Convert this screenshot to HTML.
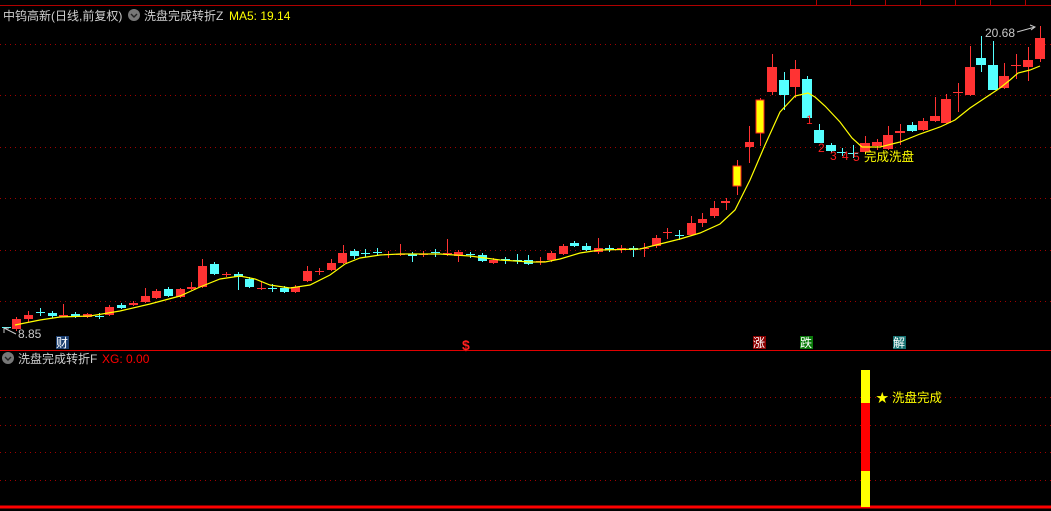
<!DOCTYPE html>
<html><head><meta charset="utf-8"><style>
html,body{margin:0;padding:0;background:#000;width:1051px;height:511px;overflow:hidden}
svg{display:block}
text{font-family:"Liberation Sans","Noto Sans CJK SC",sans-serif}
</style></head><body>
<svg width="1051" height="511" viewBox="0 0 1051 511" xmlns="http://www.w3.org/2000/svg">
<line x1="0" y1="5.5" x2="1051" y2="5.5" stroke="#b00000" stroke-width="1"/>
<g stroke="#b00000"><line x1="816.5" y1="0" x2="816.5" y2="5"/><line x1="850.5" y1="0" x2="850.5" y2="5"/><line x1="885.5" y1="0" x2="885.5" y2="5"/><line x1="920.5" y1="0" x2="920.5" y2="5"/><line x1="955.5" y1="0" x2="955.5" y2="5"/><line x1="990.5" y1="0" x2="990.5" y2="5"/><line x1="1025.5" y1="0" x2="1025.5" y2="5"/></g>
<g stroke="#a00000" stroke-dasharray="1,4" stroke-width="1">
<line x1="0" y1="44.5" x2="1051" y2="44.5"/><line x1="0" y1="95.5" x2="1051" y2="95.5"/><line x1="0" y1="147.5" x2="1051" y2="147.5"/><line x1="0" y1="198.5" x2="1051" y2="198.5"/><line x1="0" y1="250.5" x2="1051" y2="250.5"/><line x1="0" y1="301.5" x2="1051" y2="301.5"/>
<line x1="0" y1="397.5" x2="1051" y2="397.5"/><line x1="0" y1="425.5" x2="1051" y2="425.5"/><line x1="0" y1="452.5" x2="1051" y2="452.5"/><line x1="0" y1="480.5" x2="1051" y2="480.5"/>
</g>
<line x1="0" y1="350.5" x2="1051" y2="350.5" stroke="#e00000" stroke-width="1"/>
<line x1="0" y1="507" x2="1051" y2="507" stroke="#ff0000" stroke-width="3"/>
<text x="3" y="20" font-size="12" fill="#d0d0d0">中钨高新(日线,前复权)</text>
<circle cx="134" cy="15" r="6" fill="#777"/><path d="M131 14 l3 3 l3 -3" stroke="#222" stroke-width="1.4" fill="none"/>
<text x="144" y="20" font-size="12" fill="#d0d0d0">洗盘完成转折Z</text>
<text x="229" y="20" font-size="12" fill="#ffff00">MA5: 19.14</text>
<circle cx="8" cy="358" r="6" fill="#777"/><path d="M5 357 l3 3 l3 -3" stroke="#222" stroke-width="1.4" fill="none"/>
<text x="18" y="363" font-size="12" fill="#d0d0d0">洗盘完成转折F</text>
<text x="102" y="363" font-size="12" fill="#ff0000">XG: 0.00</text>
<g stroke-width="1">
<g stroke="#ff3333">
<line x1="16.5" y1="317" x2="16.5" y2="331"/><line x1="28.5" y1="311" x2="28.5" y2="322"/><line x1="63.5" y1="304" x2="63.5" y2="317"/><line x1="87.5" y1="313" x2="87.5" y2="318"/><line x1="109.5" y1="305" x2="109.5" y2="316"/><line x1="133.5" y1="301" x2="133.5" y2="306"/><line x1="145.5" y1="288" x2="145.5" y2="303"/><line x1="156.5" y1="289" x2="156.5" y2="299"/><line x1="180.5" y1="288" x2="180.5" y2="298"/><line x1="191.5" y1="282" x2="191.5" y2="290"/><line x1="202.5" y1="259" x2="202.5" y2="288"/><line x1="226.5" y1="272" x2="226.5" y2="277"/><line x1="261.5" y1="282" x2="261.5" y2="290"/><line x1="295.5" y1="285" x2="295.5" y2="293"/><line x1="307.5" y1="266" x2="307.5" y2="282"/><line x1="319.5" y1="268" x2="319.5" y2="275"/><line x1="331.5" y1="259" x2="331.5" y2="271"/><line x1="343.5" y1="245" x2="343.5" y2="264"/>
<line x1="388.5" y1="251" x2="388.5" y2="258"/><line x1="400.5" y1="244" x2="400.5" y2="256"/><line x1="423.5" y1="251" x2="423.5" y2="257"/><line x1="447.5" y1="239" x2="447.5" y2="256"/><line x1="458.5" y1="250" x2="458.5" y2="262"/><line x1="493.5" y1="258" x2="493.5" y2="264"/><line x1="540.5" y1="257" x2="540.5" y2="265"/><line x1="551.5" y1="251" x2="551.5" y2="262"/><line x1="563.5" y1="244" x2="563.5" y2="255"/><line x1="598.5" y1="238" x2="598.5" y2="254"/><line x1="621.5" y1="245" x2="621.5" y2="253"/><line x1="644.5" y1="243" x2="644.5" y2="257"/><line x1="656.5" y1="235" x2="656.5" y2="248"/><line x1="667.5" y1="228" x2="667.5" y2="239"/><line x1="691.5" y1="216" x2="691.5" y2="236"/><line x1="702.5" y1="213" x2="702.5" y2="227"/><line x1="714.5" y1="201" x2="714.5" y2="218"/><line x1="726.5" y1="198" x2="726.5" y2="210"/><line x1="737.5" y1="160" x2="737.5" y2="195"/><line x1="749.5" y1="126" x2="749.5" y2="163"/><line x1="760.5" y1="98" x2="760.5" y2="146"/><line x1="772.5" y1="54" x2="772.5" y2="95"/><line x1="795.5" y1="60" x2="795.5" y2="98"/><line x1="865.5" y1="136" x2="865.5" y2="154"/><line x1="877.5" y1="139" x2="877.5" y2="150"/><line x1="888.5" y1="126" x2="888.5" y2="150"/><line x1="900.5" y1="124" x2="900.5" y2="145"/><line x1="923.5" y1="118" x2="923.5" y2="131"/><line x1="935.5" y1="97" x2="935.5" y2="122"/><line x1="946.5" y1="94" x2="946.5" y2="124"/><line x1="958.5" y1="83" x2="958.5" y2="112"/><line x1="970.5" y1="46" x2="970.5" y2="96"/><line x1="1004.5" y1="63" x2="1004.5" y2="89"/><line x1="1016.5" y1="54" x2="1016.5" y2="79"/><line x1="1028.5" y1="47" x2="1028.5" y2="81"/><line x1="1040.5" y1="26" x2="1040.5" y2="62"/>
</g>
<g stroke="#55ffff">
<line x1="40.5" y1="308" x2="40.5" y2="316"/><line x1="52.5" y1="311" x2="52.5" y2="318"/><line x1="75.5" y1="312" x2="75.5" y2="318"/><line x1="99.5" y1="313" x2="99.5" y2="319"/><line x1="121.5" y1="303" x2="121.5" y2="309"/><line x1="168.5" y1="287" x2="168.5" y2="297"/><line x1="214.5" y1="262" x2="214.5" y2="275"/><line x1="238.5" y1="272" x2="238.5" y2="290"/><line x1="249.5" y1="277" x2="249.5" y2="288"/><line x1="272.5" y1="284" x2="272.5" y2="292"/><line x1="284.5" y1="286" x2="284.5" y2="293"/><line x1="354.5" y1="249" x2="354.5" y2="259"/><line x1="365.5" y1="249" x2="365.5" y2="257"/><line x1="377.5" y1="248" x2="377.5" y2="256"/><line x1="412.5" y1="252" x2="412.5" y2="262"/><line x1="435.5" y1="249" x2="435.5" y2="257"/><line x1="470.5" y1="252" x2="470.5" y2="258"/><line x1="482.5" y1="253" x2="482.5" y2="262"/><line x1="505.5" y1="257" x2="505.5" y2="264"/><line x1="517.5" y1="254" x2="517.5" y2="264"/><line x1="528.5" y1="255" x2="528.5" y2="265"/><line x1="574.5" y1="241" x2="574.5" y2="247"/><line x1="586.5" y1="243" x2="586.5" y2="251"/><line x1="609.5" y1="245" x2="609.5" y2="252"/><line x1="633.5" y1="246" x2="633.5" y2="257"/><line x1="679.5" y1="230" x2="679.5" y2="240"/><line x1="784.5" y1="72" x2="784.5" y2="110"/><line x1="807.5" y1="76" x2="807.5" y2="118"/><line x1="819.5" y1="124" x2="819.5" y2="143"/><line x1="831.5" y1="143" x2="831.5" y2="153"/><line x1="842.5" y1="148" x2="842.5" y2="156"/><line x1="853.5" y1="145" x2="853.5" y2="158"/><line x1="912.5" y1="122" x2="912.5" y2="132"/><line x1="981.5" y1="36" x2="981.5" y2="72"/><line x1="993.5" y1="41" x2="993.5" y2="90"/>
</g>
</g>
<g fill="#ff3333">
<rect x="12" y="319" width="9" height="10"/><rect x="24" y="315" width="9" height="4"/><rect x="59" y="315" width="9" height="2"/><rect x="83" y="314" width="9" height="3"/><rect x="105" y="307" width="9" height="8"/><rect x="129" y="303" width="9" height="2"/><rect x="141" y="296" width="9" height="6"/><rect x="152" y="291" width="9" height="7"/><rect x="176" y="289" width="9" height="8"/><rect x="187" y="287" width="9" height="2"/><rect x="198" y="266" width="9" height="21"/><rect x="222" y="274" width="9" height="1"/><rect x="257" y="288" width="9" height="1"/><rect x="291" y="287" width="9" height="5"/><rect x="303" y="271" width="9" height="10"/><rect x="315" y="271" width="9" height="1"/><rect x="327" y="263" width="9" height="7"/><rect x="338" y="253" width="9" height="10"/>
<rect x="384" y="254" width="9" height="1"/><rect x="396" y="254" width="9" height="1"/><rect x="419" y="254" width="9" height="1"/><rect x="443" y="253" width="9" height="1"/><rect x="454" y="252" width="9" height="4"/><rect x="489" y="260" width="9" height="3"/><rect x="536" y="261" width="9" height="1"/><rect x="547" y="253" width="9" height="7"/><rect x="559" y="246" width="9" height="8"/><rect x="594" y="248" width="9" height="4"/><rect x="617" y="248" width="9" height="2"/><rect x="640" y="248" width="9" height="1"/><rect x="652" y="238" width="9" height="8"/><rect x="663" y="232" width="9" height="1"/><rect x="687" y="223" width="9" height="12"/><rect x="698" y="219" width="9" height="4"/><rect x="710" y="208" width="9" height="8"/><rect x="721" y="201" width="9" height="2"/><rect x="745" y="142" width="9" height="5"/><rect x="767" y="67" width="10" height="25"/><rect x="790" y="69" width="10" height="18"/><rect x="860" y="143" width="10" height="9"/><rect x="872" y="142" width="10" height="4"/><rect x="883" y="135" width="10" height="14"/><rect x="895" y="131" width="10" height="2"/><rect x="918" y="121" width="10" height="9"/><rect x="930" y="116" width="10" height="5"/><rect x="941" y="99" width="10" height="24"/><rect x="953" y="92" width="10" height="1"/><rect x="965" y="67" width="10" height="28"/><rect x="999" y="76" width="10" height="12"/><rect x="1011" y="65" width="10" height="1"/><rect x="1023" y="60" width="10" height="7"/><rect x="1035" y="38" width="10" height="21"/>
</g>
<g fill="#55ffff">
<rect x="2" y="327" width="9" height="1"/><rect x="36" y="312" width="9" height="1"/><rect x="48" y="313" width="9" height="3"/><rect x="71" y="314" width="9" height="3"/><rect x="95" y="316" width="9" height="1"/><rect x="117" y="305" width="9" height="3"/><rect x="164" y="289" width="9" height="7"/><rect x="210" y="264" width="9" height="10"/><rect x="234" y="274" width="9" height="3"/><rect x="245" y="279" width="9" height="8"/><rect x="268" y="288" width="9" height="1"/><rect x="280" y="288" width="9" height="4"/><rect x="350" y="251" width="9" height="5"/><rect x="361" y="253" width="9" height="1"/><rect x="373" y="252" width="9" height="1"/><rect x="408" y="254" width="9" height="2"/><rect x="431" y="252" width="9" height="1"/><rect x="466" y="254" width="9" height="1"/><rect x="478" y="255" width="9" height="6"/><rect x="501" y="259" width="9" height="1"/><rect x="513" y="260" width="9" height="1"/><rect x="524" y="260" width="9" height="4"/><rect x="570" y="243" width="9" height="3"/><rect x="582" y="246" width="9" height="4"/><rect x="605" y="248" width="9" height="2"/><rect x="629" y="248" width="9" height="2"/><rect x="675" y="235" width="9" height="1"/><rect x="779" y="80" width="10" height="15"/><rect x="802" y="79" width="10" height="39"/><rect x="814" y="130" width="10" height="13"/><rect x="826" y="145" width="10" height="6"/><rect x="837" y="152" width="10" height="1"/><rect x="848" y="153" width="10" height="1"/><rect x="907" y="125" width="10" height="6"/><rect x="976" y="58" width="10" height="7"/><rect x="988" y="65" width="10" height="25"/>
</g>
<rect x="733" y="166" width="8" height="20" fill="#ffff00" stroke="#ff2020" stroke-width="1"/>
<rect x="756" y="100" width="8" height="33" fill="#ffff00" stroke="#ff2020" stroke-width="1"/>
<polyline fill="none" stroke="#ffff00" stroke-width="1.2" points="15,325 40,320 60,317 90,316 120,311 150,304 180,296 200,287 220,279 240,276 255,279 270,285 290,288 310,285 330,275 345,264 360,258 380,255 400,254 440,254 470,256 500,260 530,262 545,262 560,259 580,253 600,250 640,249 660,244 680,239 700,233 720,224 735,210 750,180 765,145 780,112 795,96 808,93 815,97 825,106 840,122 852,138 862,147 880,147 900,142 920,134 940,127 955,120 970,108 985,98 1000,88 1010,80 1018,73 1030,70 1040,66"/>
<text x="806" y="124" font-size="12" fill="#ff2020">1</text>
<text x="818" y="152" font-size="12" fill="#ff2020">2</text>
<text x="830" y="160" font-size="12" fill="#ff2020">3</text>
<text x="842" y="160" font-size="12" fill="#ff2020">4</text>
<text x="853" y="161" font-size="12" fill="#ff2020">5</text>
<text x="864" y="161" font-size="12.5" fill="#ffff00">完成洗盘</text>
<text x="985" y="37" font-size="12" fill="#c8c8c8">20.68</text>
<path d="M1017 32 L1035 27 M1030 25 L1035 27 L1031 30" stroke="#c8c8c8" fill="none"/>
<text x="18" y="338" font-size="12" fill="#c8c8c8">8.85</text>
<path d="M4 328 L16 334 M4 328 L4 333 M4 328 L9 328" stroke="#c8c8c8" fill="none"/>
<rect x="56" y="336" width="13" height="13" fill="#1c3f70"/>
<text x="56" y="347" font-size="12" fill="#fff">财</text>
<text x="462" y="350" font-size="14" fill="#ff2020" font-weight="bold">$</text>
<rect x="753" y="336" width="13" height="13" fill="#8a0000"/>
<text x="753" y="347" font-size="12" fill="#fff">涨</text>
<rect x="800" y="336" width="13" height="13" fill="#0a7a0a"/>
<text x="800" y="347" font-size="12" fill="#fff">跌</text>
<rect x="893" y="336" width="13" height="13" fill="#157070"/>
<text x="893" y="347" font-size="12" fill="#fff">解</text>
<rect x="861" y="370" width="9" height="33" fill="#ffff00"/>
<rect x="861" y="403" width="9" height="68" fill="#ff0000"/>
<rect x="861" y="471" width="9" height="36" fill="#ffff00"/>
<text x="876" y="402" font-size="12.5" fill="#ffff00">★ 洗盘完成</text>
</svg>
</body></html>
